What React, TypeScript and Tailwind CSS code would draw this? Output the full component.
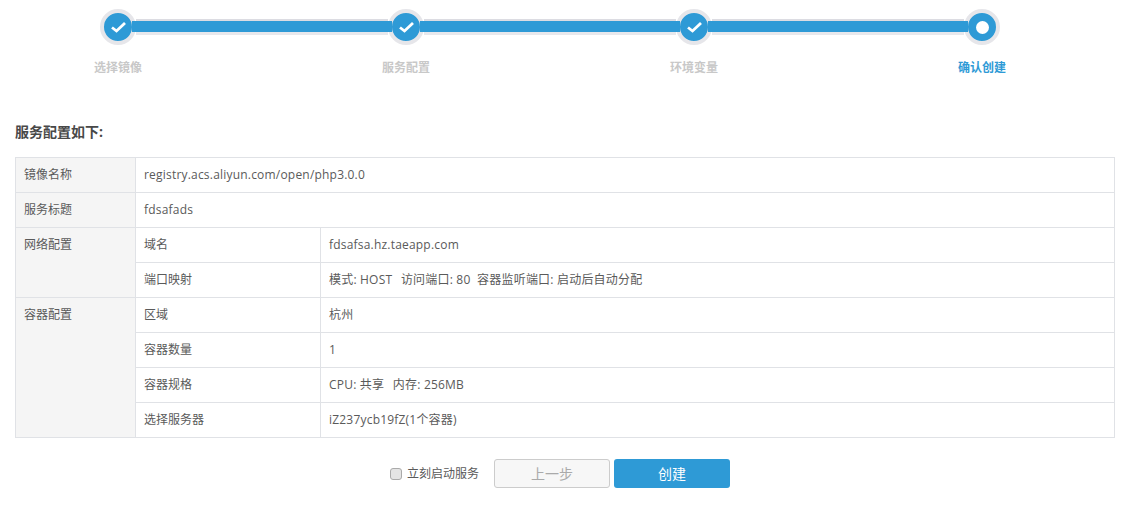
function Check() {
  return (
    <svg width="17" height="14" viewBox="0 0 17 14" fill="none">
      <path d="M2 7.5 L6.5 11 L15 3" stroke="#fff" strokeWidth="2.8" />
    </svg>
  );
}
function Dot({ last }: { last?: boolean }) {
  return (
    <div className="relative z-10 flex h-[36px] w-[36px] shrink-0 items-center justify-center rounded-full border-[4px] border-[#e6e6ea] bg-[#2e9ad6]">
      {last ? <div className="h-[13px] w-[13px] rounded-full bg-white" /> : <Check />}
    </div>
  );
}
function Bar() {
  return (
    <div className="relative mt-[-1px] h-[16px] w-[252px] shrink-0 border-t-2 border-b-[3px] border-t-[#dcdce2] border-b-[#e8e8ec]">
      <div className="absolute inset-y-0 left-[-4px] right-[-4px] z-20 bg-[#2e9ad6]" />
    </div>
  );
}
const th = "border border-[#e0e2e6] bg-[#f5f5f5] px-2 align-top pt-[8px] font-normal text-left";
const td = "border border-[#e0e2e6] px-2 h-[35px] align-middle";
const val = "border border-[#e0e2e6] px-2 h-[35px] align-middle tracking-[0.2px]";
export default function App() {
  return (
    <div className="h-[505px] w-[1123px] bg-white font-['Open_Sans','Noto_Sans_CJK_SC',sans-serif] text-[12px] text-[#5a5a5a]">
      <div className="flex items-center pl-[100px] pt-[9px]">
        <Dot /><Bar /><Dot /><Bar /><Dot /><Bar /><Dot last />
      </div>
      <div className="mt-[13px] flex w-[1006px] justify-between pl-[94px] text-[12px] font-bold leading-[20px] text-[#c8c8c8]">
        <span>选择镜像</span>
        <span>服务配置</span>
        <span>环境变量</span>
        <span className="text-[#2e9ad6]">确认创建</span>
      </div>
      <h3 className="mt-[44px] ml-[15px] text-[14px] font-bold leading-[20px] text-[#484848]">服务配置如下:</h3>
      <div className="mx-[15px] mt-[15px] w-[1100px]">
        <table className="w-[1100px] table-fixed border-collapse">
          <colgroup>
            <col className="w-[120px]" />
            <col className="w-[185px]" />
            <col />
          </colgroup>
          <tbody>
            <tr><th className={th}>镜像名称</th><td className={val} colSpan={2}>registry.acs.aliyun.com/open/php3.0.0</td></tr>
            <tr><th className={th}>服务标题</th><td className={val} colSpan={2}>fdsafads</td></tr>
            <tr><th className={th} rowSpan={2}>网络配置</th><td className={td}>域名</td><td className={val}>fdsafsa.hz.taeapp.com</td></tr>
            <tr><td className={td}>端口映射</td><td className={val}><span className="mr-[2px]">模式: HOST</span>&nbsp;&nbsp;访问端口: 80&nbsp;&nbsp;容器监听端口: 启动后自动分配</td></tr>
            <tr><th className={th} rowSpan={4}>容器配置</th><td className={td}>区域</td><td className={val}>杭州</td></tr>
            <tr><td className={td}>容器数量</td><td className={val}>1</td></tr>
            <tr><td className={td}>容器规格</td><td className={val}><span className="mr-[2px]">CPU: 共享</span>&nbsp;&nbsp;内存: 256MB</td></tr>
            <tr><td className={td}>选择服务器</td><td className={val}>iZ237ycb19fZ(1个容器)</td></tr>
          </tbody>
        </table>
      </div>
      <div className="mt-[21px] flex items-center pl-[390px]">
        <span className="h-[12px] w-[12px] rounded-[3px] border border-[#aaa] bg-[#e4e4e4]" />
        <span className="ml-[5px] mr-[15px]">立刻启动服务</span>
        <button className="h-[29px] w-[116px] rounded-[3px] border border-[#ccc] bg-[#f7f7f7] text-[14px] text-[#aaa]">上一步</button>
        <button className="ml-[4px] h-[29px] w-[116px] rounded-[3px] bg-[#2e9ad6] text-[14px] text-white">创建</button>
      </div>
    </div>
  );
}
